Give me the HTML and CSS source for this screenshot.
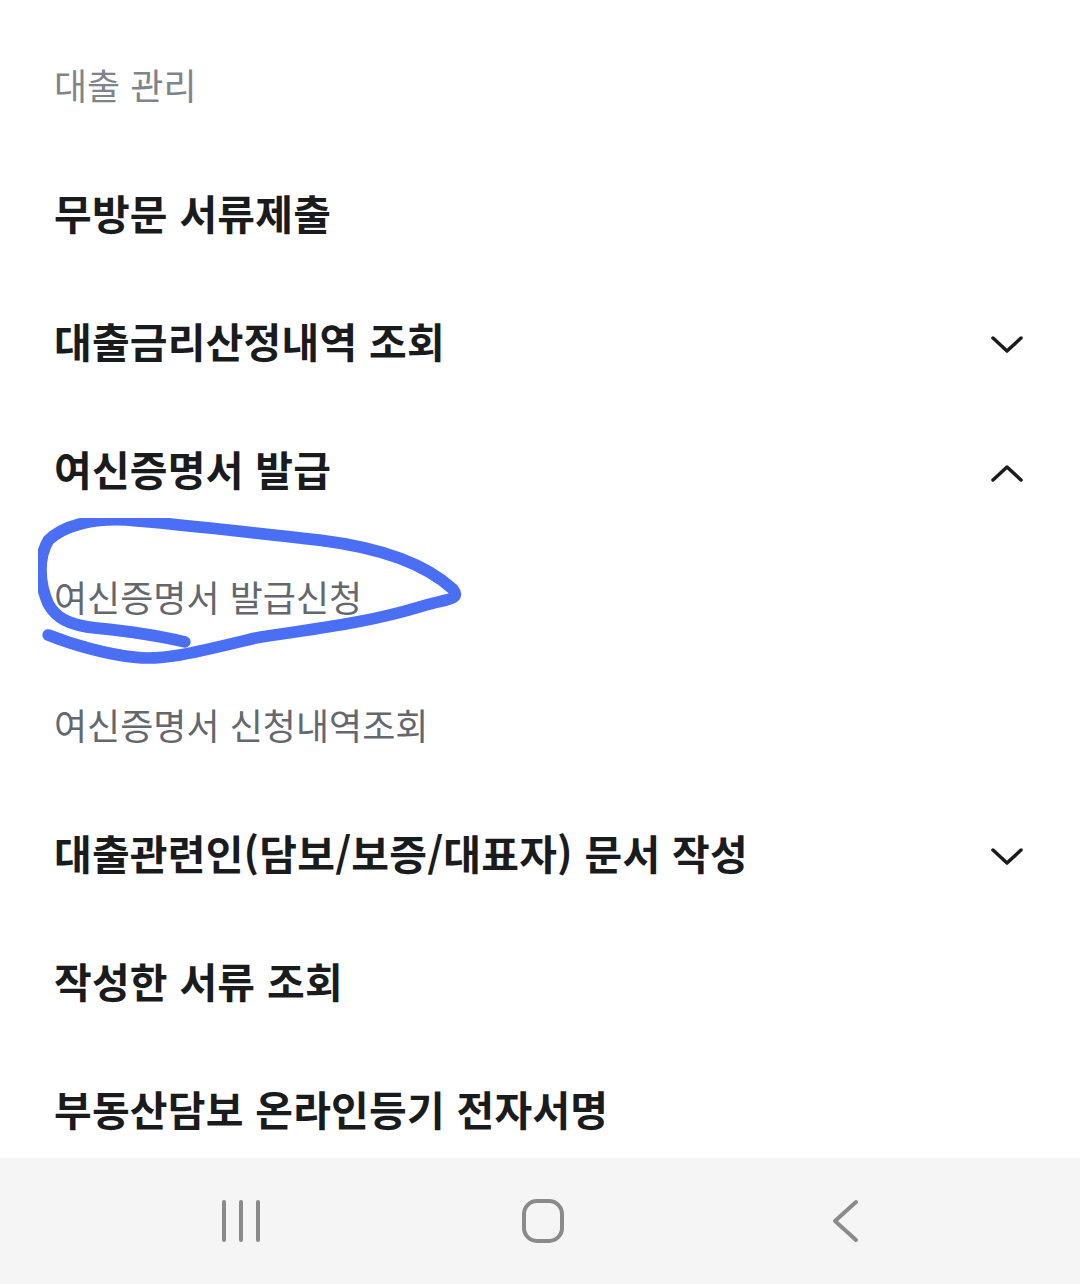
FILE: index.html
```html
<!DOCTYPE html>
<html lang="ko">
<head>
    <meta charset="UTF-8">
    <meta name="viewport" content="width=device-width, initial-scale=1.0">
    <title>대출 관리</title>
    <link rel="stylesheet" href="styles.css">
</head>
<body>

<div class="screen">
    <div class="menu">
        <div class="menu-title">대출 관리</div>

        <div class="menu-item">무방문 서류제출</div>

        <div class="menu-item">
            <span>대출금리산정내역 조회</span>
            <svg class="chevron" viewBox="0 0 32 18"><path d="M2 2 L16 15 L30 2"/></svg>
        </div>

        <div class="menu-item">
            <span>여신증명서 발급</span>
            <svg class="chevron" viewBox="0 0 32 18"><path d="M2 16 L16 3 L30 16"/></svg>
        </div>

        <div class="sub-item marked">
            여신증명서 발급신청
            <!-- 손글씨 표시 -->
            <svg class="scribble" viewBox="0 0 440 160">
                <path d="M10 120 C 35 130, 70 140, 100 143 C 130 146, 160 138, 223 123 C 270 115, 330 110, 395 90 C 418 83, 434 84, 425 73 C 402 52, 362 32, 290 23 C 220 15, 140 6, 90 2 C 55 0, 25 8, 10 23 C 0 40, 0 65, 10 88 C 18 102, 30 110, 60 113 C 90 116, 120 120, 150 127"/>
            </svg>
        </div>

        <div class="sub-item">여신증명서 신청내역조회</div>

        <div class="menu-item">
            <span>대출관련인(담보/보증/대표자) 문서 작성</span>
            <svg class="chevron" viewBox="0 0 32 18"><path d="M2 2 L16 15 L30 2"/></svg>
        </div>

        <div class="menu-item">작성한 서류 조회</div>

        <div class="menu-item">부동산담보 온라인등기 전자서명</div>
    </div>

    <div class="nav-bar">
        <svg class="nav-icon" viewBox="0 0 44 44"><path d="M5 3 V41 M22 3 V41 M39 3 V41"/></svg>
        <svg class="nav-icon" viewBox="0 0 44 44"><rect x="3" y="2" width="38" height="40" rx="13"/></svg>
        <svg class="nav-icon" viewBox="0 0 44 44"><path d="M33 3 L12 22 L33 41"/></svg>
    </div>
</div>

</body>
</html>
```

FILE: styles.css
```css
body {
    margin: 0;
    padding: 0;
    background: #fff;
    font-family: "Noto Sans CJK KR", "Noto Sans", sans-serif;
    color: #1a1b1d;
}
.screen {
    display: flex;
    flex-direction: column;
    height: 100vh;
    overflow: hidden;
}
.menu {
    flex: 1;
    overflow: hidden;
    padding-top: 20px;
}
.menu-title,
.menu-item,
.sub-item {
    height: 128px;
    display: flex;
    align-items: center;
    justify-content: space-between;
    padding: 0 57px 0 54px;
    white-space: nowrap;
}
.menu-title {
    font-size: 36px;
    color: #7f848a;
}
.menu-item {
    font-size: 41px;
    font-weight: 700;
    letter-spacing: 0.2px;
}
.sub-item {
    font-size: 36px;
    color: #64686e;
    justify-content: flex-start;
}
.marked {
    position: relative;
}
.scribble {
    position: absolute;
    left: 38px;
    top: -14px;
    width: 430px;
    height: 156px;
    fill: none;
    stroke: #4a6ff5;
    stroke-width: 12;
    stroke-linecap: round;
    stroke-linejoin: round;
}
.chevron {
    width: 32px;
    height: 18px;
    margin-top: 10px;
    fill: none;
    stroke: #1a1b1d;
    stroke-width: 3.5;
    stroke-linecap: round;
    stroke-linejoin: round;
}
.nav-bar {
    height: 126px;
    flex-shrink: 0;
    background: #f5f5f5;
    display: flex;
    align-items: center;
    gap: 258px;
    padding-left: 219px;
}
.nav-icon {
    width: 44px;
    height: 44px;
    fill: none;
    stroke: #8a8a8a;
    stroke-width: 4;
    stroke-linecap: round;
    stroke-linejoin: round;
}
```
